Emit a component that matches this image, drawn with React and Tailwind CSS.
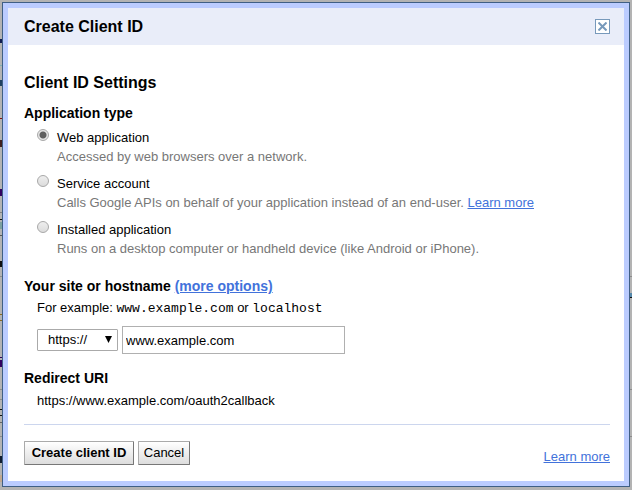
const appTypes = [
  { id: "web", title: "Web application", text: "Accessed by web browsers over a network." },
  {
    id: "service",
    title: "Service account",
    text: "Calls Google APIs on behalf of your application instead of an end-user.",
    link: true,
  },
  {
    id: "installed",
    title: "Installed application",
    text: "Runs on a desktop computer or handheld device (like Android or iPhone).",
  },
];

// Edges of the dimmed page that show beside the dialog: y, height, colour.
const leftMarks = [
  [39, 4, "#101c50"], [65, 1, "#80b0b0"], [80, 6, "#204060"], [118, 1, "#801010"],
  [140, 7, "#402020"], [189, 7, "#300060"], [212, 1, "#808080"], [219, 1, "#111111"],
  [222, 7, "#7ba0a0"], [235, 1, "#555555"], [261, 6, "#101010"], [276, 1, "#8c8c8c"],
  [314, 1, "#8a6a20"], [320, 1, "#8a6a20"], [357, 1, "#300060"], [360, 7, "#300060"],
  [389, 1, "#8c8c8c"], [399, 1, "#8c8c8c"], [409, 1, "#111111"], [415, 1, "#111111"],
  [422, 1, "#666666"], [436, 1, "#8c8c8c"], [456, 7, "#101c30"], [475, 7, "#c0a890"],
];
const rightMarks = [
  [276, 1, "#8c8c8c"], [293, 4, "#5588aa"], [297, 1, "#111111"], [389, 1, "#8c8c8c"], [436, 1, "#8c8c8c"],
];

function PageEdge({ marks, className }) {
  return (
    <svg width="2" height="490" aria-hidden="true" className={className}>
      {marks.map(([y, h, fill]) => (
        <rect key={y} x="0" y={y} width="2" height={h} fill={fill} />
      ))}
    </svg>
  );
}

function AppType({ id, title, text, link }) {
  return (
    <div className="flex h-[46px] gap-2">
      <input
        type="radio"
        name="app-type"
        id={id}
        defaultChecked={id === "web"}
        className="mt-px h-3 w-3 shrink-0 appearance-none rounded-full border border-[#a8a8a8] bg-linear-to-b from-[#eeeeee] to-[#dcdcdc] checked:bg-[radial-gradient(circle,#606060_3px,#e6e6e6_4px)]"
      />
      <div className="text-[13px] leading-[19px]">
        <label htmlFor={id} className="block">{title}</label>
        <p className="text-[#777777]">
          {text}
          {link && (
            <>
              {" "}
              <a href="#service" className="text-[#4272db] underline">Learn more</a>
            </>
          )}
        </p>
      </div>
    </div>
  );
}

export default function App() {
  return (
    <div className="relative min-h-screen bg-[#b3b3b3] p-0.5 pb-[3px] font-['Liberation_Sans',Arial,sans-serif] text-[13px] text-black">
      <PageEdge marks={leftMarks} className="absolute top-0 left-0" />
      <PageEdge marks={rightMarks} className="absolute top-0 right-0" />
      <div className="border border-[#3f5f85]">
        <div role="dialog" aria-labelledby="dialog-title" className="border-[5px] border-[#bbccff] bg-white">
          <header className="flex h-[37px] items-center justify-between bg-[#e9edf9] pr-3.5 pl-4">
            <h1 id="dialog-title" className="text-base leading-5 font-bold">Create Client ID</h1>
            <button type="button" aria-label="Close" className="flex h-[15px] w-[15px] items-center justify-center border border-[#7799bb] bg-white">
              <svg width="9" height="9" viewBox="0 0 9 9" stroke="#7799bb" strokeWidth="2" aria-hidden="true">
                <path d="M.5 .5 8.5 8.5M8.5 .5 .5 8.5" />
              </svg>
            </button>
          </header>
          <form className="pt-7 pr-3.5 pb-4 pl-4">
            <h2 className="text-base leading-5 font-bold">Client ID Settings</h2>
            <fieldset className="pt-3">
              <legend className="float-left w-full text-sm leading-4 font-bold">Application type</legend>
              <div className="clear-both pt-[7px] pl-[13px]">
                {appTypes.map((type) => (
                  <AppType key={type.id} {...type} />
                ))}
              </div>
            </fieldset>
            <h3 className="pt-3 text-sm leading-4 font-bold">
              <label htmlFor="host">Your site or hostname</label>{" "}
              <a href="#options" className="text-[#4272db] underline">(more options)</a>
            </h3>
            <p className="mt-1.5 h-4 pl-[13px] leading-4">
              For example: <code className="font-['Liberation_Mono',monospace] text-[13px]">www.example.com</code> or{" "}
              <code className="font-['Liberation_Mono',monospace] text-[13px]">localhost</code>
            </p>
            <div className="flex items-center gap-1 pt-2.5 pl-[13px]">
              <div className="relative">
                <select aria-label="Protocol" className="block h-[22px] w-[81px] appearance-none rounded-[1px] border border-[#aaaaaa] bg-white pl-2.5">
                  <option>https://</option>
                  <option>http://</option>
                </select>
                <svg className="pointer-events-none absolute top-[7px] right-1.5" width="7" height="7" viewBox="0 0 7 7" aria-hidden="true">
                  <path d="M0 0h7L3.5 7z" />
                </svg>
              </div>
              <input id="host" type="text" defaultValue="www.example.com" className="h-7 w-[223px] border border-[#b0b0b0] px-[3px]" />
            </div>
            <h3 className="pt-4 text-sm leading-4 font-bold">Redirect URI</h3>
            <p className="pt-[7px] pl-[13px] leading-4">https://www.example.com/oauth2callback</p>
            <footer className="mt-[15px] flex items-center gap-1 border-t border-[#ccd6ee] pt-4">
              <button type="submit" className="h-6 w-[110px] rounded-[1px] border border-[#aaaaaa] border-r-[#777777] border-b-[#777777] bg-linear-to-b from-white to-[#dddddd] font-bold whitespace-nowrap">Create client ID</button>
              <button type="button" className="h-6 w-[52px] rounded-[1px] border border-[#aaaaaa] border-r-[#777777] border-b-[#777777] bg-linear-to-b from-white to-[#dddddd]">Cancel</button>
              <a href="#help" className="ml-auto pt-2 leading-4 text-[#4272db] underline">Learn more</a>
            </footer>
          </form>
        </div>
      </div>
    </div>
  );
}
